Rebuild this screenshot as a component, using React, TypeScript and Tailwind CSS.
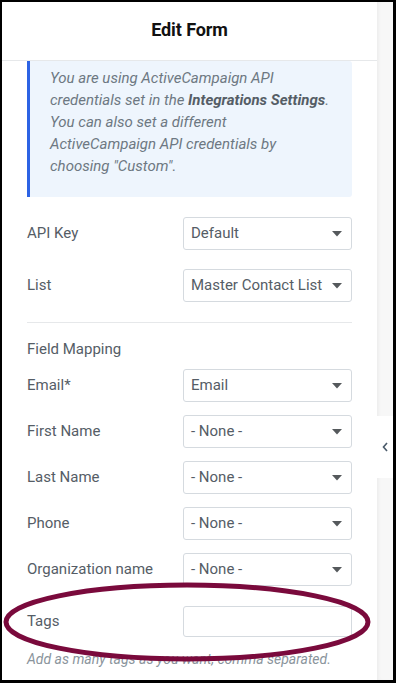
import React from "react";

const Caret = () => (
  <svg width="10" height="6" viewBox="0 0 10 6" className="absolute right-[9px] top-1/2 -translate-y-1/2">
    <path d="M0 0 L10 0 L5 5.5 Z" fill="#55595c" />
  </svg>
);

const Select = ({ value }: { value: string }) => (
  <div className="relative w-[169px] h-[33px] border border-[#d5dadf] rounded-[3px] bg-white flex items-center pl-[7px] text-[15px] text-[#555d66]">
    {value}
    <Caret />
  </div>
);

const Row = ({ label, value, cls }: { label: string; value: string; cls: string }) => (
  <div className={`flex items-center justify-between ${cls}`}>
    <span className="text-[15px] text-[#555d66]">{label}</span>
    <Select value={value} />
  </div>
);

export default function App() {
  return (
    <div className="relative w-[396px] h-[683px] bg-black pl-[2px] pt-[2px] pr-[3px] pb-[3px] overflow-hidden" style={{ fontFamily: "Roboto, 'Liberation Sans', sans-serif" }}>
      <div className="flex w-full h-full bg-white overflow-hidden">
        <div className="w-[375px] h-full flex flex-col bg-white">
          <div className="h-[59px] shrink-0 border-b border-[#e6e8ea] flex items-center justify-center pb-[4px]">
            <span className="text-[18px] font-bold text-[#111] tracking-[-0.1px]">Edit Form</span>
          </div>
          <div className="px-[25px]">
            <div className="bg-[#eef5fd] border-l-[3px] border-[#2d63e4] rounded-r-[3px] pl-[20px] pr-[8px] pt-[6px] pb-[20px] italic text-[15px] leading-[22px] text-[#6d7882]">
              You are using ActiveCampaign API<br />
              credentials set in the <b className="font-bold text-[#555d66]">Integrations Settings</b>.<br />
              You can also set a different<br />
              ActiveCampaign API credentials by<br />
              choosing "Custom".
            </div>
            <Row label="API Key" value="Default" cls="mt-[20px]" />
            <Row label="List" value="Master Contact List" cls="mt-[19px]" />
            <div className="mt-[20px] h-px bg-[#e6e8ea]" />
            <div className="mt-[16px] text-[15px] leading-[20px] text-[#555d66]">Field Mapping</div>
            <Row label="Email*" value="Email" cls="mt-[10px]" />
            <Row label="First Name" value="- None -" cls="mt-[13px]" />
            <Row label="Last Name" value="- None -" cls="mt-[13px]" />
            <Row label="Phone" value="- None -" cls="mt-[13px]" />
            <Row label="Organization name" value="- None -" cls="mt-[13px]" />
            <div className="flex items-center justify-between mt-[20px]">
              <span className="text-[15px] text-[#555d66]">Tags</span>
              <div className="w-[169px] h-[31px] border border-[#d5dadf] rounded-[3px] bg-white" />
            </div>
            <div className="mt-[13px] italic text-[14px] leading-[18px] text-[#8a949c]">Add as many tags as you want, comma separated.</div>
          </div>
        </div>
        <div className="relative flex-1 h-full bg-[#f7f7f7] shadow-[inset_3px_0_4px_-2px_rgba(0,0,0,0.06)]">
          <div className="absolute left-0 right-0 top-[414px] h-[62px] bg-white flex items-center justify-center">
            <svg width="6" height="10" viewBox="0 0 6 10">
              <path d="M5 1 L1.5 5 L5 9" fill="none" stroke="#4a5a6a" strokeWidth="1.6" />
            </svg>
          </div>
        </div>
      </div>
      <svg className="absolute left-0 top-0 pointer-events-none" width="396" height="683">
        <ellipse cx="187" cy="622" rx="181" ry="37" fill="none" stroke="#7a0a3c" strokeWidth="5" />
      </svg>
    </div>
  );
}
